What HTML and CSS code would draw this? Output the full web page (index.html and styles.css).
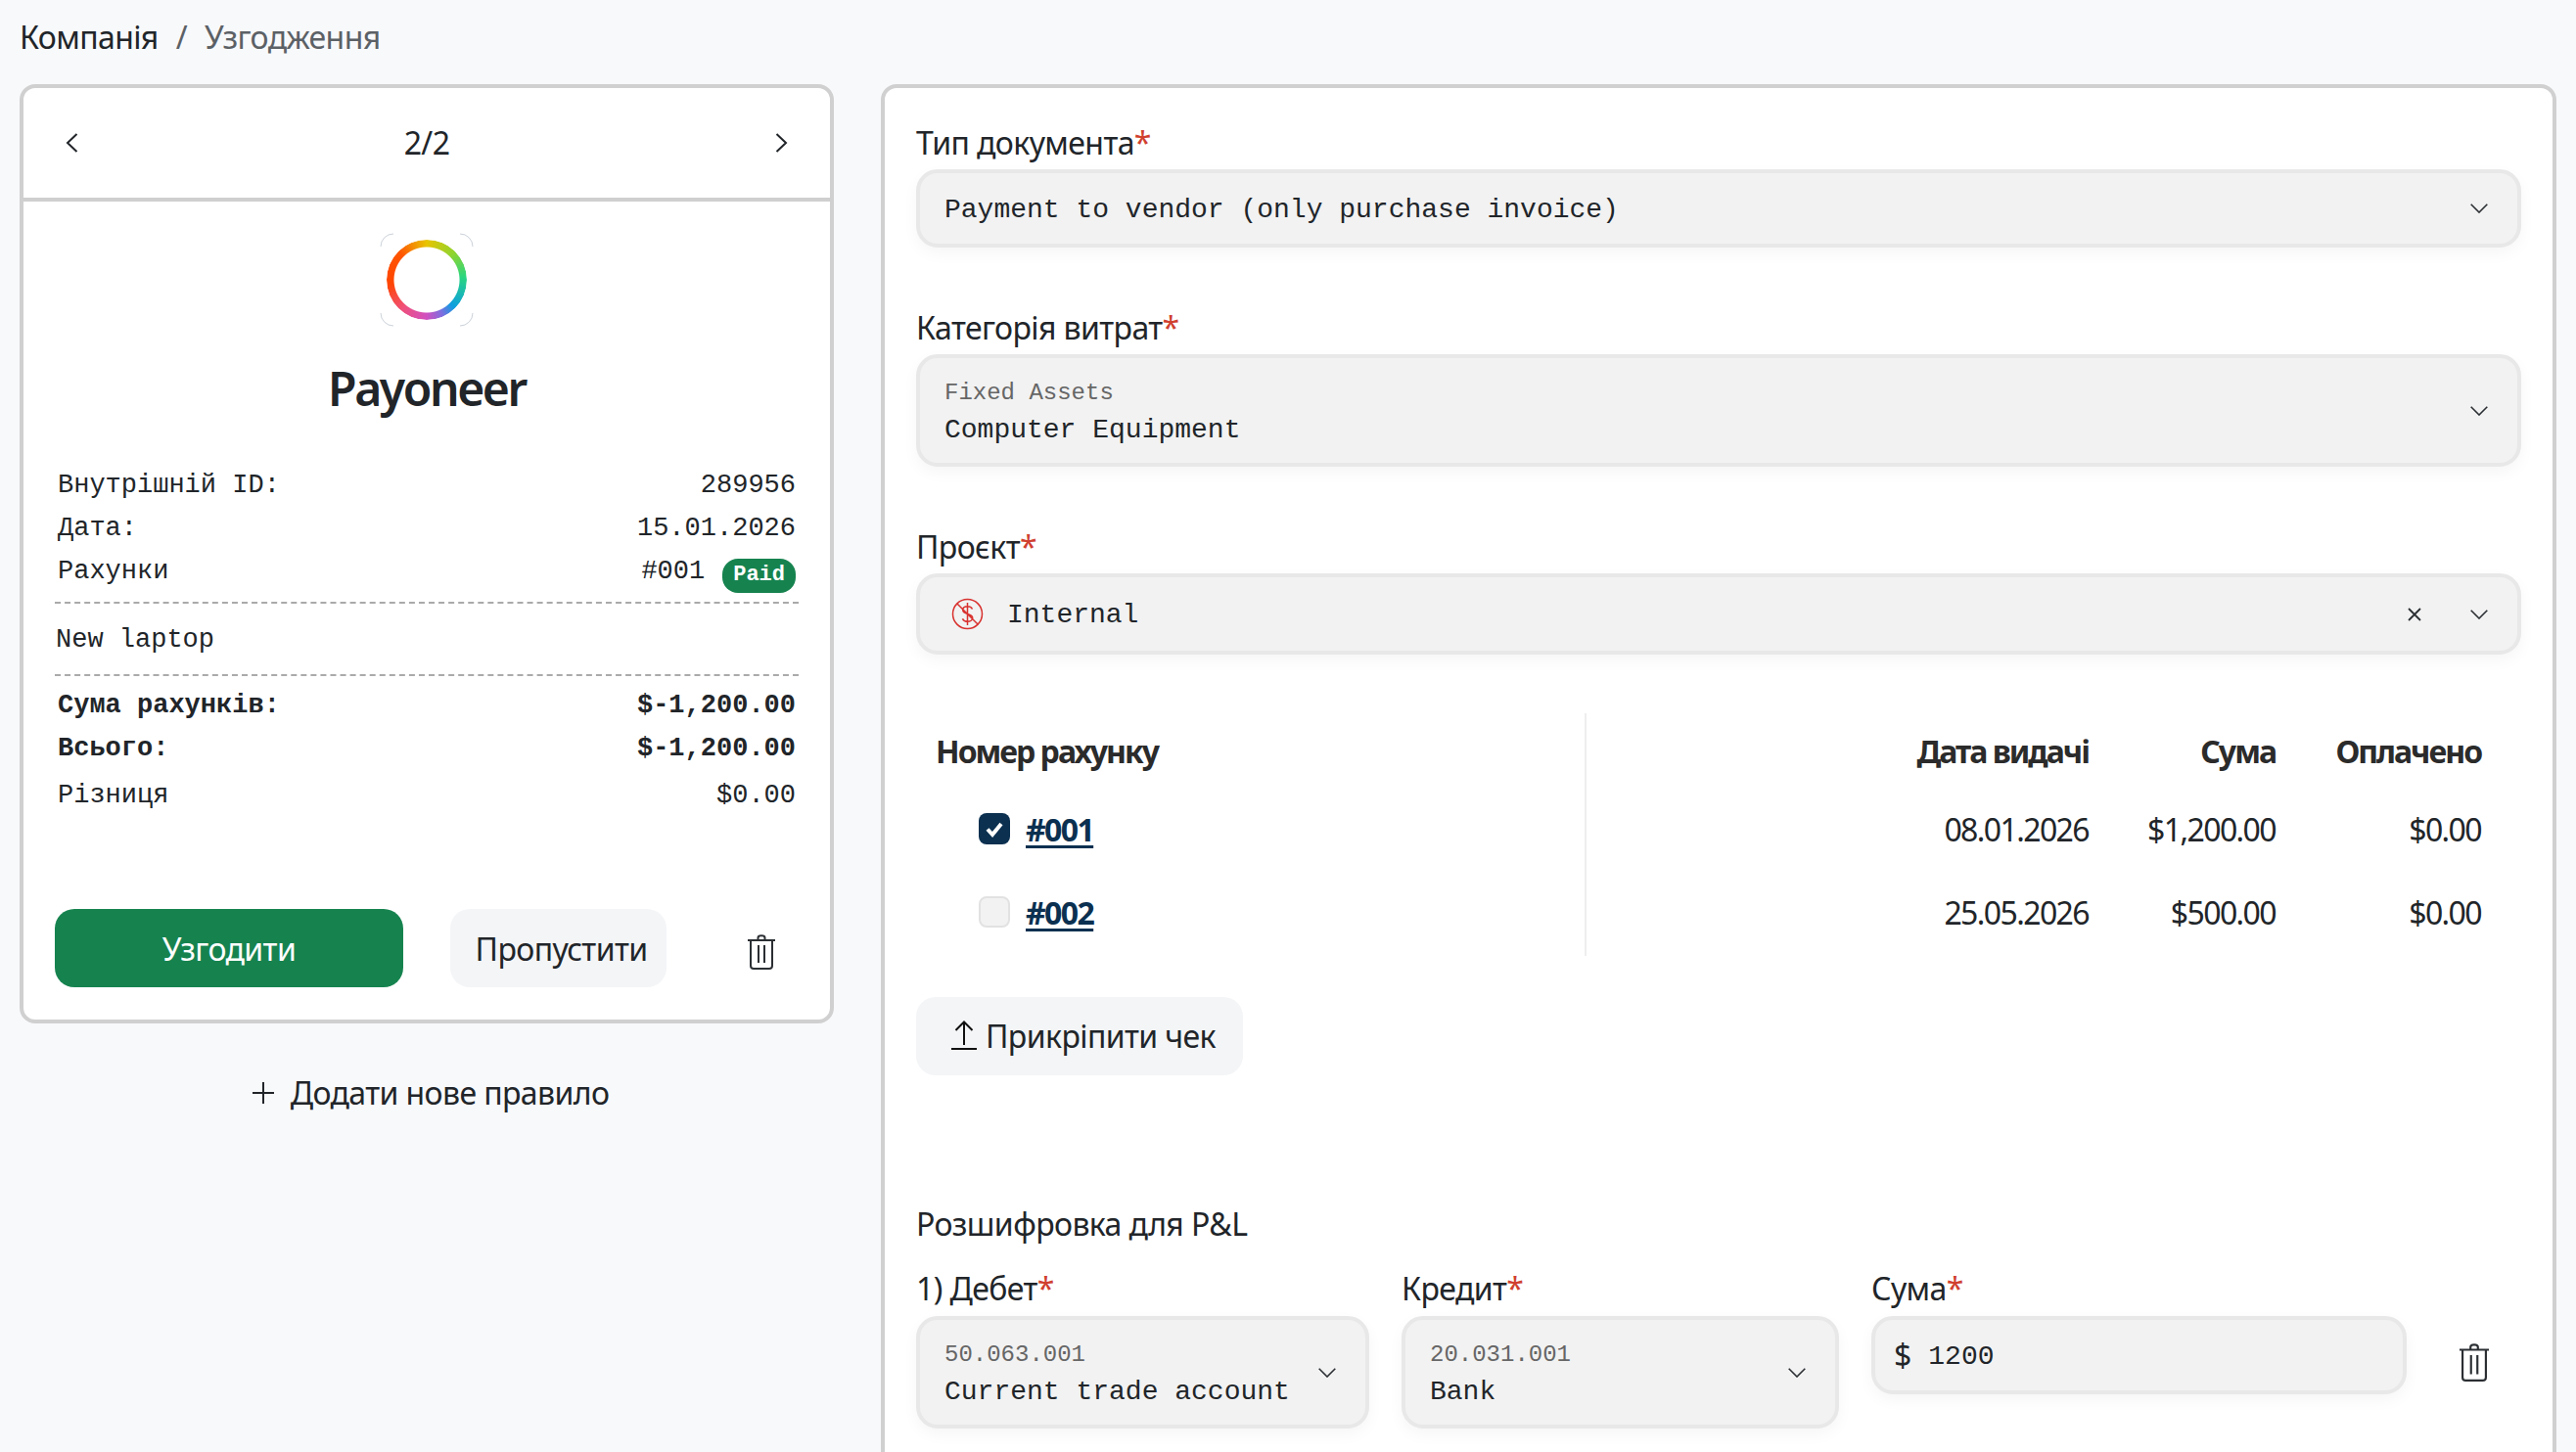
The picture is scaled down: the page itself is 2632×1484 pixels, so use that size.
FILE: index.html
```html
<!DOCTYPE html>
<html lang="uk">
<head>
    <meta charset="UTF-8" />
    <title>Узгодження</title>
    <link rel="stylesheet" href="styles.css">
</head>
<body>
    <!-- breadcrumb -->
    <nav class="breadcrumb">
        <span class="crumb">Компанія</span>
        <span class="crumb-sep">/</span>
        <span class="crumb-current">Узгодження</span>
    </nav>

    <main class="layout">
        <!-- left column -->
        <section class="side">
            <div class="card rule-card">
                <div class="pager">
                    <svg class="pager-icon" viewBox="0 0 13 20"><path d="M11.5 1 2 10l9.5 9" /></svg>
                    <span>2/2</span>
                    <svg class="pager-icon" viewBox="0 0 13 20"><path d="M1.5 1 11 10l-9.5 9" /></svg>
                </div>
                <div class="rule-body">
                    <div class="logo">
                        <svg class="logo-corners" viewBox="0 0 96 96">
                            <path d="M1 14A13 13 0 0 1 14 1M82 1A13 13 0 0 1 95 14M95 82A13 13 0 0 1 82 95M14 95A13 13 0 0 1 1 82" />
                        </svg>
                        <div class="logo-ring"></div>
                    </div>
                    <h1 class="vendor">Payoneer</h1>

                    <div class="info-row"><span>Внутрішній ID:</span><span>289956</span></div>
                    <div class="info-row"><span>Дата:</span><span>15.01.2026</span></div>
                    <div class="info-row">
                        <span>Рахунки</span>
                        <span class="invoice-ref">#001 <span class="badge">Paid</span></span>
                    </div>
                    <div class="memo">New laptop</div>
                    <div class="info-row info-strong"><span>Сума рахунків:</span><span>$-1,200.00</span></div>
                    <div class="info-row info-strong"><span>Всього:</span><span>$-1,200.00</span></div>
                    <div class="info-row info-diff"><span>Різниця</span><span>$0.00</span></div>

                    <div class="actions">
                        <button type="button" class="btn btn-primary">Узгодити</button>
                        <button type="button" class="btn btn-light btn-skip">Пропустити</button>
                        <svg class="trash trash-small" viewBox="0 0 28 36"><use href="#icon-trash" /></svg>
                    </div>
                </div>
            </div>
            <button type="button" class="add-rule">
                <svg class="add-icon" viewBox="0 0 22 22"><path d="M11 0v22M0 11h22" /></svg>
                Додати нове правило
            </button>
        </section>

        <!-- right column -->
        <section class="card form-card">
            <div class="field">
                <label class="field-label">Тип документа<span class="req">*</span></label>
                <div class="select select-single">
                    <span class="select-value">Payment to vendor (only purchase invoice)</span>
                    <svg class="chevron" viewBox="0 0 18 10"><path d="M.7.7 9 9 17.3.7" /></svg>
                </div>
            </div>
            <div class="field">
                <label class="field-label">Категорія витрат<span class="req">*</span></label>
                <div class="select select-double">
                    <div class="select-value">
                        <div class="select-group">Fixed Assets</div>
                        <div>Computer Equipment</div>
                    </div>
                    <svg class="chevron" viewBox="0 0 18 10"><path d="M.7.7 9 9 17.3.7" /></svg>
                </div>
            </div>
            <div class="field">
                <label class="field-label">Проєкт<span class="req">*</span></label>
                <div class="select select-project">
                    <svg class="project-icon" viewBox="0 0 33 33">
                        <circle cx="16.5" cy="16.5" r="15" />
                        <path d="M6 6l21 21M21.5 11.5c-1-2-3-2.800-5-2.800-2.700 0-4.800 1.500-4.800 3.800 0 5 10 3 10 8 0 2.300-2.300 3.800-5 3.800-2.300 0-4.300-1-5.300-3M16.500 5v23" />
                    </svg>
                    <span class="select-value">Internal</span>
                    <svg class="clear" viewBox="0 0 14 14"><path d="M1 1l12 12M13 1 1 13" /></svg>
                    <svg class="chevron" viewBox="0 0 18 10"><path d="M.7.7 9 9 17.3.7" /></svg>
                </div>
            </div>

            <table class="invoices">
                <thead>
                    <tr>
                        <th class="col-number">Номер рахунку</th>
                        <th>Дата видачі</th>
                        <th>Сума</th>
                        <th>Оплачено</th>
                    </tr>
                </thead>
                <tbody>
                    <tr>
                        <td class="col-number">
                            <div class="invoice-cell">
                                <span class="check check-on">
                                    <svg viewBox="0 0 32 32"><path d="M9 16.500l5 5.500 9-11" /></svg>
                                </span>
                                <a class="invoice-link">#001</a>
                            </div>
                        </td>
                        <td>08.01.2026</td>
                        <td>$1,200.00</td>
                        <td>$0.00</td>
                    </tr>
                    <tr>
                        <td class="col-number">
                            <div class="invoice-cell">
                                <span class="check"></span>
                                <a class="invoice-link">#002</a>
                            </div>
                        </td>
                        <td>25.05.2026</td>
                        <td>$500.00</td>
                        <td>$0.00</td>
                    </tr>
                </tbody>
            </table>

            <button type="button" class="btn btn-light btn-attach">
                <svg class="upload-icon" viewBox="0 0 26 30"><path d="M13 25V2M4.500 10 13 1.500 21.500 10M0 29h26" /></svg>
                Прикріпити чек
            </button>

            <h2 class="section-title">Розшифровка для P&amp;L</h2>

            <div class="split-row">
                <div class="split-debit">
                    <label class="field-label">1) Дебет<span class="req">*</span></label>
                    <div class="select select-double">
                        <div class="select-value">
                            <div class="select-group">50.063.001</div>
                            <div>Current trade account</div>
                        </div>
                        <svg class="chevron" viewBox="0 0 18 10"><path d="M.7.7 9 9 17.3.7" /></svg>
                    </div>
                </div>
                <div class="split-credit">
                    <label class="field-label">Кредит<span class="req">*</span></label>
                    <div class="select select-double">
                        <div class="select-value">
                            <div class="select-group">20.031.001</div>
                            <div>Bank</div>
                        </div>
                        <svg class="chevron" viewBox="0 0 18 10"><path d="M.7.7 9 9 17.3.7" /></svg>
                    </div>
                </div>
                <div class="split-amount">
                    <label class="field-label">Сума<span class="req">*</span></label>
                    <div class="select select-single amount-input">
                        <span class="currency">$</span>
                        <span class="select-value">1200</span>
                    </div>
                </div>
                <svg class="trash trash-big" viewBox="0 0 28 36"><use href="#icon-trash" /></svg>
            </div>
        </section>
    </main>

    <!-- shared trash icon -->
    <svg class="icon-defs">
        <symbol id="icon-trash" viewBox="0 0 28 36">
            <path d="M0 6h28M3 6v26c0 2 1 3 3 3h16c2 0 3-1 3-3V6M10.500 5.500V3.500c0-3 7-3 7 0v2M11 11v18M17 11v18" />
        </symbol>
    </svg>
</body>
</html>
```

FILE: styles.css
```css
* {
    box-sizing:border-box;
}
html, body {
    height:100%;
    overflow:hidden;
}
body {
    margin:0;
    padding:0 20px;
    background:#f8f9fb;
    color:#212529;
    font-family:"Noto Sans", "Open Sans", sans-serif;
    font-size:32px;
    line-height:44px;
    letter-spacing:-.6px;
}
button {
    font-family:inherit;
    font-size:inherit;
    letter-spacing:inherit;
    color:inherit;
    border:none;
    padding:0;
    background:none;
}

/* breadcrumb */
.breadcrumb {
    display:flex;
    gap:18px;
    margin-top:16px;
    margin-bottom:26px;
    height:44px;
}
.crumb-sep, .crumb-current {
    color:#5c6166;
}

/* layout */
.layout {
    display:flex;
    gap:48px;
    align-items:flex-start;
}
.side {
    flex:0 0 832px;
}
.card {
    background:#fff;
    border:4px solid #d0d0d0;
    border-radius:16px;
}

/* left card */
.pager {
    display:flex;
    justify-content:space-between;
    align-items:center;
    height:116px;
    padding:0 43px;
    border-bottom:4px solid #cfcfcf;
}
.pager-icon {
    width:13px;
    height:20px;
    fill:none;
    stroke:#212529;
    stroke-width:2;
}
.rule-body {
    padding:32px 32px 33px;
    font-family:"Liberation Mono", monospace;
    font-size:27px;
    letter-spacing:0;
}
.logo {
    display:grid;
    place-items:center;
    width:96px;
    height:96px;
    margin:0 auto;
}
.logo > * {
    grid-area:1 / 1;
}
.logo-corners {
    width:96px;
    height:96px;
    fill:none;
    stroke:#ccd2da;
    stroke-width:1;
}
.logo-ring {
    width:82px;
    height:82px;
    border-radius:50%;
    background:conic-gradient(#e8c400 0deg, #8fd430 45deg, #2ad67e 85deg, #0d9fe0 135deg, #7a6fe0 155deg, #d04fc0 180deg, #f0507a 220deg, #ff4500 265deg, #ff5500 315deg, #e8c400 360deg);
    -webkit-mask:radial-gradient(circle, transparent 33px, #000 34px);
    mask:radial-gradient(circle, transparent 33px, #000 34px);
}
.vendor {
    margin:31px 0 43px;
    font-family:"Noto Sans", sans-serif;
    font-size:48px;
    font-weight:600;
    letter-spacing:-2.4px;
    line-height:64px;
    text-align:center;
}
.info-row {
    display:flex;
    justify-content:space-between;
    padding:2px 3px 0;
    height:44px;
}
.invoice-ref {
    display:flex;
    align-items:center;
    gap:18px;
    height:44px;
}
.badge {
    padding:0 11px;
    height:35px;
    margin-top:9px;
    border-radius:16px;
    background:#16834f;
    color:#fff;
    font-size:22px;
    font-weight:bold;
    line-height:33px;
}
.memo {
    margin-top:11px;
    padding:0 1px;
    height:76px;
    line-height:74px;
    border-top:2px dashed #aaa;
    border-bottom:2px dashed #aaa;
}
.memo + .info-row {
    margin-top:6px;
}
.info-strong {
    font-weight:bold;
}
.info-diff {
    margin-top:4px;
}
.actions {
    display:flex;
    align-items:center;
    gap:48px;
    margin-top:96px;
    font-family:"Noto Sans", sans-serif;
    font-size:32px;
    letter-spacing:-.6px;
}
.btn {
    height:80px;
    border-radius:20px;
}
.btn-primary {
    flex:0 0 356px;
    background:#16834f;
    color:#fff;
}
.btn-light {
    background:#f4f5f7;
}
.btn-skip {
    flex:0 0 221px;
    padding-left:6px;
}
.trash {
    fill:none;
    stroke:#2b2f33;
    stroke-width:2;
}
.trash-small {
    width:28px;
    height:36px;
    margin-left:auto;
    margin-right:24px;
    margin-top:8px;
}
.add-rule {
    display:flex;
    align-items:center;
    justify-content:center;
    gap:17px;
    width:100%;
    margin-top:49px;
    padding-left:8px;
}
.add-icon {
    width:22px;
    height:22px;
    fill:none;
    stroke:#212529;
    stroke-width:2;
}

/* form card */
.form-card {
    flex:1;
    padding:34px 32px 80px;
}
.field {
    margin-bottom:60px;
}
.field-label {
    display:block;
    margin-bottom:5px;
}
.req {
    color:#d0402f;
}
.select {
    display:flex;
    align-items:center;
    padding:0 30px 0 25px;
    background:#f2f2f2;
    border:4px solid #e8e8e8;
    border-radius:22px;
    box-shadow:0 6px 16px rgba(0,0,0,.04);
    font-family:"Liberation Mono", monospace;
    font-size:28px;
    line-height:38px;
    letter-spacing:0;
}
.select-value {
    flex:1;
    padding-top:3px;
}
.select-single {
    height:80px;
}
.select-double {
    height:115px;
}
.select-group {
    color:#666;
    font-size:24px;
}
.select-project {
    height:83px;
}
.chevron {
    width:18px;
    height:10px;
    fill:none;
    stroke:#2b2f33;
    stroke-width:1.6;
}
.clear {
    width:14px;
    height:14px;
    margin-right:50px;
    fill:none;
    stroke:#2b2f33;
    stroke-width:1.8;
}
.project-icon {
    width:33px;
    height:33px;
    margin-left:7px;
    margin-right:24px;
    fill:none;
    stroke:#d8322f;
    stroke-width:1.5;
}

/* invoices table */
.invoices {
    width:1599px;
    table-layout:fixed;
    border-collapse:collapse;
}
.invoices th, .invoices td {
    padding:0 0 3px;
    text-align:right;
    font-weight:normal;
}
.invoices th {
    height:78px;
    padding-top:3px;
    font-weight:bold;
    font-size:32px;
    letter-spacing:-2px;
    color:#2b2b2b;
}
.invoices td {
    height:85px;
    letter-spacing:-1.6px;
}
.invoices th:nth-child(1) { width:684px; }
.invoices th:nth-child(2) { width:514px; }
.invoices th:nth-child(3) { width:191px; }
.invoices th:nth-child(4) { width:210px; }
.invoices .col-number {
    text-align:left;
    border-right:2px solid #eee;
}
.invoices th.col-number {
    padding-left:20px;
}
.invoices td.col-number {
    padding-left:64px;
}
.invoice-cell {
    display:flex;
    align-items:center;
    gap:16px;
}
.check {
    flex:0 0 32px;
    height:32px;
    margin-top:-3px;
    background:#f2f2f2;
    border:2px solid #e2e2e2;
    border-radius:8px;
}
.check-on {
    background:#0b3050;
    border:none;
}
.check svg {
    display:block;
    fill:none;
    stroke:#fff;
    stroke-width:4;
}
.invoice-link {
    font-weight:bold;
    color:#0b3050;
    text-decoration:underline;
    text-underline-offset:4px;
}
.btn-attach {
    display:flex;
    align-items:center;
    gap:9px;
    margin-top:42px;
    padding-left:36px;
    padding-bottom:2px;
    width:334px;
}
.upload-icon {
    width:26px;
    height:30px;
    fill:none;
    stroke:#111;
    stroke-width:2;
}
.section-title {
    margin:130px 0 22px;
    font-size:32px;
    font-weight:normal;
}

/* debit / credit row */
.split-row {
    display:flex;
    align-items:flex-start;
    gap:33px;
}
.split-row .field-label {
    margin-bottom:6px;
}
.split-debit {
    flex:0 0 463px;
}
.split-credit {
    flex:0 0 447px;
}
.split-amount {
    flex:0 0 547px;
}
.amount-input {
    padding-left:19px;
}
.currency {
    margin-right:17px;
    font-family:"Noto Sans", sans-serif;
    font-size:32px;
}
.trash-big {
    width:34px;
    height:39px;
    margin-left:19px;
    margin-top:78px;
}
.icon-defs {
    display:none;
}
```
